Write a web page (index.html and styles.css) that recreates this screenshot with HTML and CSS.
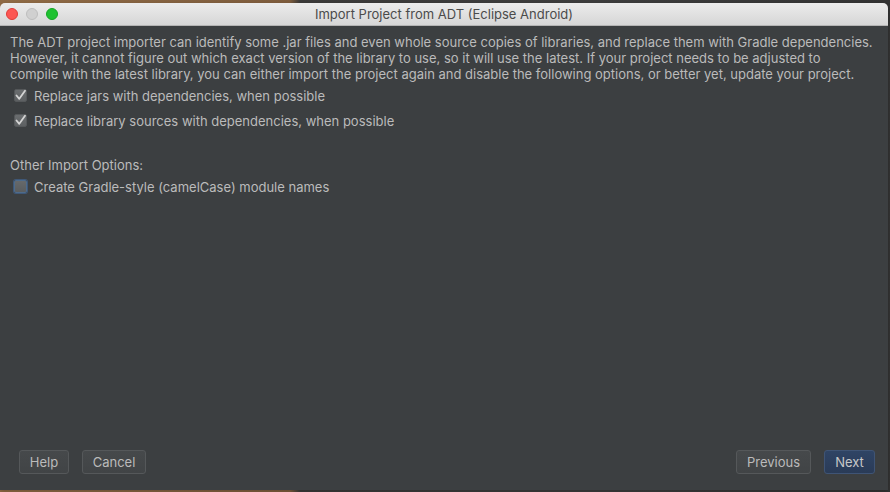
FILE: index.html
```html
<!DOCTYPE html>
<html>
<head>
<meta charset="utf-8">
<link rel="stylesheet" href="styles.css">
</head>
<body>
<div class="desktop">
  <div class="window">
    <div class="titlebar">
      <div class="lights">
        <span class="light red"></span>
        <span class="light gray"></span>
        <span class="light green"></span>
      </div>
      <div class="title">Import Project from ADT (Eclipse Android)</div>
    </div>
    <div class="content">
      <div class="main">
        <p class="intro">The ADT project importer can identify some .jar files and even whole source copies of libraries, and replace them with Gradle dependencies.<br>However, it cannot figure out which exact version of the library to use, so it will use the latest. If your project needs to be adjusted to<br>compile with the latest library, you can either import the project again and disable the following options, or better yet, update your project.</p>
        <label class="option">
          <span class="box checked"><svg viewBox="0 0 13 13" width="13" height="13"><path d="M2.5 6.5 L5.3 9.8 L11 1.8" fill="none" stroke="#d4d4d4" stroke-width="1.8" stroke-linecap="round" stroke-linejoin="round"/></svg></span>
          <span>Replace jars with dependencies, when possible</span>
        </label>
        <label class="option">
          <span class="box checked"><svg viewBox="0 0 13 13" width="13" height="13"><path d="M2.5 6.5 L5.3 9.8 L11 1.8" fill="none" stroke="#d4d4d4" stroke-width="1.8" stroke-linecap="round" stroke-linejoin="round"/></svg></span>
          <span>Replace library sources with dependencies, when possible</span>
        </label>
        <div class="section">Other Import Options:</div>
        <label class="option">
          <span class="box focus"></span>
          <span>Create Gradle-style (camelCase) module names</span>
        </label>
      </div>
      <div class="buttons">
        <div class="group">
          <button class="btn help">Help</button>
          <button class="btn cancel">Cancel</button>
        </div>
        <div class="group">
          <button class="btn prev">Previous</button>
          <button class="btn next">Next</button>
        </div>
      </div>
    </div>
  </div>
</div>
</body>
</html>
```
FILE: styles.css
```css
html, body {
  margin: 0;
  padding: 0;
  width: 890px;
  height: 492px;
  overflow: hidden;
  background: #2e2b28;
}
.desktop {
  width: 890px;
  height: 492px;
  background: linear-gradient(90deg, #8f6a45 0px, #7d5c3d 290px, #3b3a39 300px, #3d3d3d 600px, #333 890px);
  padding-top: 3px;
  box-sizing: border-box;
  font-family: Inter, "Liberation Sans", Arial, sans-serif;
}
.window {
  width: 888px;
  height: 487px;
  border-radius: 5px 5px 0 0;
  overflow: hidden;
  display: flex;
  flex-direction: column;
  box-shadow: 0 2px 4px rgba(0,0,0,0.2);
}
.titlebar {
  height: 22px;
  background: linear-gradient(#ececec, #d6d6d6);
  border-bottom: 1px solid #b4b4b4;
  display: flex;
  align-items: center;
  position: relative;
  flex: none;
}
.lights {
  display: flex;
  gap: 8px;
  padding-left: 6px;
}
.light {
  width: 12px;
  height: 12px;
  border-radius: 50%;
  box-sizing: border-box;
}
.light.red { background: #fc5753; border: 1px solid #df3d38; }
.light.gray { background: #d0d0d0; border: 1px solid #bdbdbd; }
.light.green { background: #1fc231; border: 1px solid #15a625; }
.title {
  position: absolute;
  left: 0;
  right: 0;
  text-align: center;
  font-size: 13px;
  color: #4b4b4b;
  top: 3px;
}
.content {
  flex: 1;
  background: #3c3f41;
  display: flex;
  flex-direction: column;
  justify-content: space-between;
  color: #bbbbbb;
  font-size: 13px;
}
.main {
  padding: 8px 10px 0 10px;
}
.intro {
  margin: 0;
  line-height: 16px;
}
.option {
  display: flex;
  align-items: center;
  height: 25px;
  padding-left: 4px;
}
.option:first-of-type {
  margin-top: 1px;
}
.box {
  width: 13px;
  height: 13px;
  box-sizing: border-box;
  border-radius: 2px;
  margin-right: 7px;
  display: flex;
  flex: none;
}
.box.checked {
  background: linear-gradient(#6a6d6f, #5d6062);
  border: 1px solid #55585a;
}
.box.checked svg {
  margin: -1px;
}
.box.focus {
  background: linear-gradient(#66696b, #5a5d5f);
  border: 1px solid #4d6b8c;
  box-shadow: 0 0 0 1px #3f5878;
}
.section {
  margin-top: 23px;
  height: 18px;
  line-height: 18px;
}
.buttons {
  display: flex;
  justify-content: space-between;
  padding: 0 13px 16px 19px;
}
.group {
  display: flex;
  gap: 13px;
}
.btn {
  height: 24px;
  box-sizing: border-box;
  border: 1px solid #55585a;
  border-radius: 3px;
  background: linear-gradient(#46494b, #414446);
  color: #bbbbbb;
  font-family: Inter, "Liberation Sans", Arial, sans-serif;
  font-size: 13px;
  padding: 0;
}
.btn.help { width: 50px; }
.btn.cancel { width: 64px; }
.btn.prev { width: 75px; }
.btn.next {
  width: 51px;
  background: linear-gradient(#2f4465, #2a3b57);
  border-color: #3f5475;
  color: #c8c8c8;
}
```
